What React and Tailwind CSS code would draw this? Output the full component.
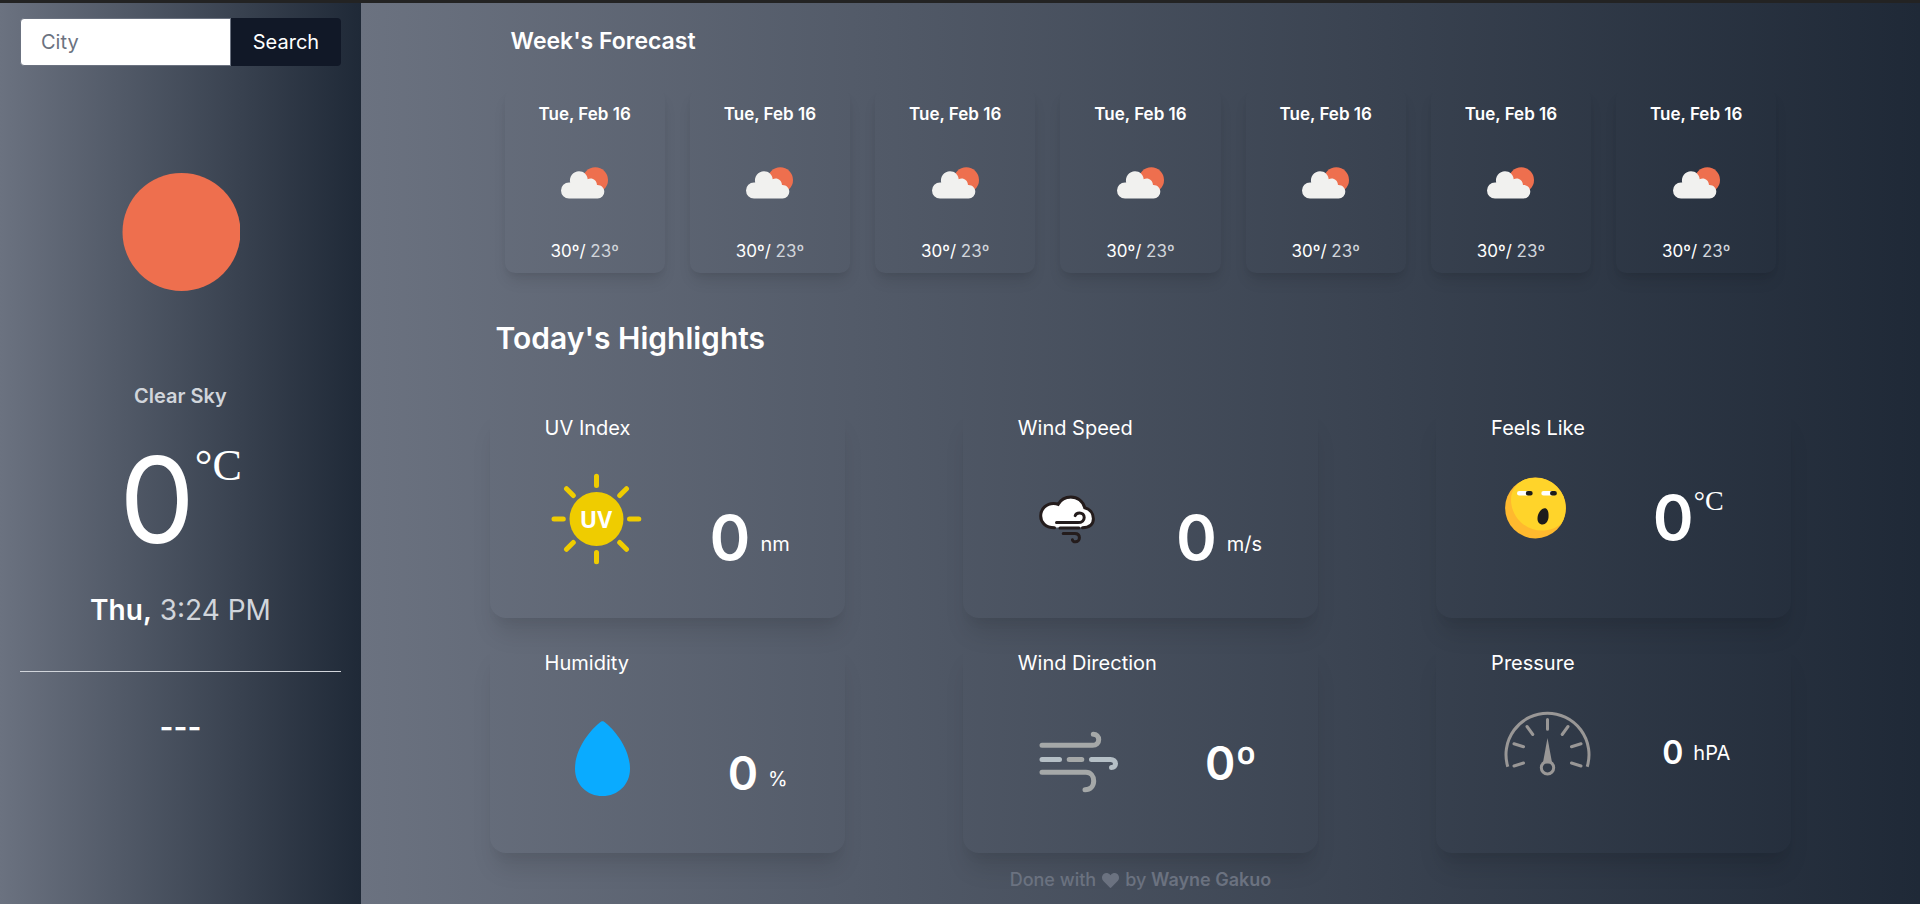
import { FaHeart } from "react-icons/fa";

const SunIcon = () => (
  <svg className="size-[120px]" viewBox="0 0 120 120" aria-hidden="true">
    <circle cx="61.500" cy="60" r="59" fill="#ee6f4e" />
  </svg>
);

const PartlyCloudyIcon = () => (
  <svg className="h-8 w-[47px]" viewBox="0 0 47 32" aria-hidden="true">
    <circle cx="34.300" cy="13" r="12.700" fill="#ee6f4e" />
    <path
      fill="#f1f1ef"
      d="M8 31.500a8 8 0 0 1 0-16h1.200A9 9 0 0 1 18 4.300c4.700 0 8.300 3.500 8.700 8 4-2 9 .5 9.300 5.700 4-.3 7.300 2.700 7.300 6.700a6.700 6.700 0 0 1-6.700 6.800z"
    />
  </svg>
);

const IconCanvas = ({ children }) => (
  <svg className="h-[100px] w-[110px]" viewBox="0 0 110 100" fill="none" strokeLinecap="round" aria-hidden="true">
    {children}
  </svg>
);

const UvIcon = () => (
  <IconCanvas>
    <g stroke="#efcc00" strokeWidth="5">
      <path d="M51.500 6.200v9.300M51.500 82.500v9.300M9 49h9.300M84.500 49h9.300" />
      <path d="m21.500 18.700 6.800 6.800M74.700 25.500l6.800-6.800M21.500 79.300l6.800-6.800M74.700 72.500l6.800 6.800" />
    </g>
    <circle cx="51.500" cy="49" r="27" fill="#efcc00" />
    <text
      x="51"
      y="58"
      textAnchor="middle"
      fill="#fff"
      className="font-['Open_Sans',sans-serif] text-[23px] font-bold"
    >
      UV
    </text>
  </IconCanvas>
);

const WindSpeedIcon = () => (
  <IconCanvas>
    <path
      d="M39 57.500H34C27 57.500 23.500 51.500 23.500 46c0-7 5.500-12 12-12 2 0 3.500.5 4.500 1.200C42.500 31 47 28.200 52.800 28.200c6.400 0 12 4 13.600 10.600C72 40 75.600 44 75.600 48.700c0 5.300-3.600 8.800-10.600 8.800z"
      fill="#fff"
    />
    <g stroke="#241c1c" strokeWidth="3">
      <path d="M36.500 57.700C27 57.700 22.700 52 22.700 46c0-7.500 6-12.600 12.800-12.600 2 0 3.300.2 4.700.9C42.500 30.200 47 27 52.800 27c6.600 0 12.200 4 13.900 10.700 5.200 1.400 8.700 5.600 8.700 11 0 5.600-4 9-10.900 9" />
      <path d="M38.500 52.600H60c4 0 6.200-2.300 6.200-5.200 0-2.700-2-4.500-4.600-4.500-2.300 0-4 1.100-4.400 2.700M42 57.900h19M45.200 63.600h11.500c3 0 4.700 1.700 4.700 4.200 0 2.400-1.800 4-4 4-1.600 0-2.700-.8-3-2" />
    </g>
  </IconCanvas>
);

const FaceIcon = () => (
  <IconCanvas>
    <circle cx="44.500" cy="38" r="30.400" fill="#ffb92e" />
    <path
      d="M31.500 10.500A30.400 30.400 0 0 1 70.500 53.500C65.500 58 58.500 60.600 51 60.600c-17 0-31-14-31-31 0-7.500 4-15.100 11.500-19.100z"
      fill="#ffd42a"
    />
    <path d="M28.200 23.200h8M52.500 23.200h8" stroke="#fff" strokeWidth="4.400" />
    <path d="M37 23.200h2.500M61.200 23.200h2.500" stroke="#1c1c1c" strokeWidth="4.400" />
    <path
      d="M53.500 38.300c3.200-.3 4.600 4.200 4 9.200-.5 4-2.800 7-5.800 7-3.300 0-5.500-2.800-5.200-6.600.3-4.200 3.500-9.300 7-9.600z"
      fill="#1c1c1c"
    />
  </IconCanvas>
);

const DropIcon = () => (
  <IconCanvas>
    <path
      d="M57.500 16.200c1 0 2 .7 3.200 1.700C69 24.500 85 43 85 63.700 85 79.500 73 91 57.500 91S30 79.500 30 63.700C30 43 46 24.500 54.300 17.900c1.200-1 2.200-1.700 3.200-1.700z"
      fill="#0aabff"
    />
  </IconCanvas>
);

const WindDirectionIcon = () => (
  <IconCanvas>
    <g stroke="#a5a8a8" strokeWidth="5">
      <path d="M24 40.300H74.500c4 0 6.200-2.500 6.200-5.600 0-3.200-2.200-5.400-5.400-5.400M24 67.300H68c4.700 0 7.700 3.700 7.700 8.700s-3.300 8.700-8.700 8.700M51.200 54.600h12.600" />
      <path d="M24 54.600h17.500M73.500 54.600h19c3 0 5 1.700 5 4.200 0 2.200-1.500 3.700-4 3.700" stroke="#b5bfc6" />
    </g>
  </IconCanvas>
);

const GaugeIcon = () => (
  <IconCanvas>
    <g stroke="#999796" strokeWidth="3">
      <path d="M16.800 61.800A41.500 41.500 0 1 1 96.200 61.800" strokeLinecap="butt" />
      <path d="M56.500 14.500v9.800M36 21.500l5.800 8M77 21.500l-5.800 8M23 38.800l9.500 3M90 38.800l-9.500 3M23 61l9.500-3M90 61l-9.500-3" />
      <circle cx="56.500" cy="62.700" r="6.200" />
    </g>
    <path d="M56.500 33l4.700 25.500h-9.400z" fill="#999796" />
  </IconCanvas>
);

const days = Array.from({ length: 7 }, (_, id) => ({ id, date: "Tue, Feb 16", high: "30º/", low: "23º" }));

const highlights = [
  { title: "UV Index", Icon: UvIcon, value: "0", unit: "nm", size: "text-[62px]", offset: "pt-9", unitOffset: "pt-3" },
  { title: "Wind Speed", Icon: WindSpeedIcon, value: "0", unit: "m/s", size: "text-[62px]", offset: "pt-9 pr-2", unitOffset: "pt-3" },
  { title: "Feels Like", Icon: FaceIcon, value: "0", degree: "°C", size: "text-[62px]", offset: "pr-4 pb-1" },
  { title: "Humidity", Icon: DropIcon, value: "0", unit: "%", size: "text-[46px]", offset: "pt-9 pl-4", unitOffset: "pt-3" },
  { title: "Wind Direction", Icon: WindDirectionIcon, value: "0º", size: "text-[46px]", offset: "pt-4 pl-4" },
  { title: "Pressure", Icon: GaugeIcon, value: "0", unit: "hPA", size: "text-[32px]", offset: "pb-1", unitOffset: "pt-0" },
];

function DayCard({ date, high, low }) {
  return (
    <article className="flex h-[184px] flex-col items-center justify-between rounded-[10px] pt-[11px] pb-2 shadow-[0_10px_15px_-3px_rgba(0,0,0,0.1),0_4px_6px_-2px_rgba(0,0,0,0.05)]">
      <h3 className="text-[17px] leading-7 font-semibold">{date}</h3>
      <PartlyCloudyIcon />
      <p className="text-[17px] leading-7">
        {high} <span className="text-[#d1d5db]">{low}</span>
      </p>
    </article>
  );
}

function HighlightCard({ title, Icon, value, unit, degree, size, offset, unitOffset }) {
  return (
    <article className="h-[211px] rounded-2xl pt-[6px] shadow-[0_20px_25px_-5px_rgba(0,0,0,0.1),0_10px_10px_-5px_rgba(0,0,0,0.04)]">
      <h3 className="pl-[55px] text-xl leading-[30px]">{title}</h3>
      <div className="mt-[27px] flex items-center pl-[55px]">
        <Icon />
        <p className={`flex flex-1 items-center justify-center ${offset}`}>
          <span className={`${size} leading-none font-semibold`}>{value}</span>
          {unit && <span className={`pl-[10px] text-xl leading-none ${unitOffset}`}>{unit}</span>}
          {degree && (
            <span className="self-start font-['Liberation_Serif',serif] text-[28px] leading-none">{degree}</span>
          )}
        </p>
      </div>
    </article>
  );
}

export default function App() {
  return (
    <div className="flex min-h-screen border-t-[3px] border-[#232323] font-[Inter,sans-serif] text-white">
      <aside className="w-[18.8%] shrink-0 bg-linear-to-r/srgb from-[#6b7280] to-[#1f2937] px-5 pt-[15px]">
        <form className="flex h-12" onSubmit={(e) => e.preventDefault()}>
          <input
            type="text"
            aria-label="City"
            placeholder="City"
            className="min-w-0 flex-1 rounded-l border border-[#6b7280] bg-white pl-5 text-xl text-gray-800 placeholder:text-[#6b7280]"
          />
          <button type="submit" className="w-[110px] rounded-r bg-[#111827] text-xl">
            Search
          </button>
        </form>
        <div className="flex flex-col items-center">
          <div className="mt-[106px]">
            <SunIcon />
          </div>
          <p className="mt-[90px] text-xl leading-7 font-semibold text-[#d1d5db]">Clear Sky</p>
          <p className="mt-[30px] flex items-start">
            <span className="text-[120px] leading-[120px]">0</span>
            <span className="font-['Liberation_Serif',serif] text-[44px] leading-[52px]">°C</span>
          </p>
          <p className="mt-8 text-[28px] leading-9">
            <span className="font-semibold">Thu,</span> <span className="text-[#d1d5db]">3:24 PM</span>
          </p>
        </div>
        <hr className="mt-[43px] border-[#d1d5db]" />
        <p className="mt-[37px] text-center text-3xl leading-9 font-semibold">---</p>
      </aside>

      <main className="min-w-0 flex-1 bg-linear-to-r/srgb from-[#6b7280] to-[#1f2937]">
        <div className="mx-auto w-[83.5%]">
          <section className="px-[15px] pt-5">
            <h2 className="pl-[6px] text-[23px] leading-9 font-semibold">Week's Forecast</h2>
            <div className="mt-[30px] grid grid-cols-7 gap-[25px]">
              {days.map((day) => (
                <DayCard key={day.id} {...day} />
              ))}
            </div>
          </section>
          <section className="pt-[43px]">
            <h2 className="pl-[6px] text-3xl leading-[44px] font-semibold">Today's Highlights</h2>
            <div className="mt-[47px] grid grid-cols-3 gap-x-[118px] gap-y-6">
              {highlights.map((item) => (
                <HighlightCard key={item.title} {...item} />
              ))}
            </div>
          </section>
        </div>
        <footer className="mt-[13px] flex items-center justify-center gap-[6px] text-lg leading-7 font-medium text-[#6b7280]">
          <span>Done with</span>
          <FaHeart className="size-[17px]" aria-hidden="true" />
          <span>
            by <a href="#wayne-gakuo" className="font-semibold">Wayne Gakuo</a>
          </span>
        </footer>
      </main>
    </div>
  );
}
